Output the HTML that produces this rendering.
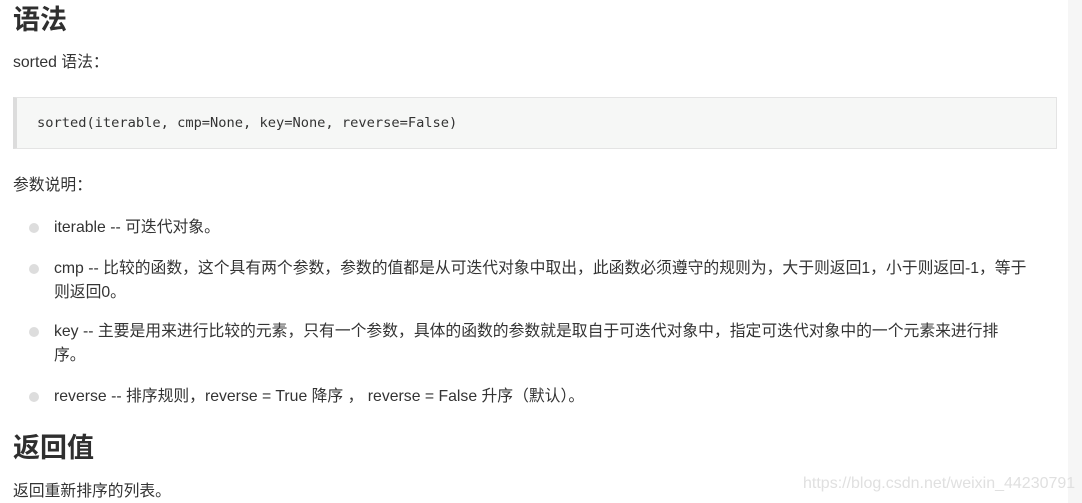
<!DOCTYPE html>
<html><head><meta charset="utf-8"><style>
html,body{margin:0;padding:0;width:1082px;height:503px;overflow:hidden;background:#fff;}
body{font-family:"Liberation Sans","Noto Sans CJK SC",sans-serif;color:#333;font-size:15.8px;position:relative;}
.a{position:absolute;white-space:nowrap;line-height:24px;}
h2{position:absolute;margin:0;font-size:27px;font-weight:bold;color:#2f2f2f;line-height:36px;}
.code{position:absolute;left:13px;top:97px;width:1039px;height:50px;background:#f6f7f6;border:1px solid #e4e4e4;border-left:4px solid #dcdcdc;}
.code span{position:absolute;left:20px;top:15px;font-family:"DejaVu Sans Mono","Liberation Mono",monospace;font-size:13.7px;color:#333;line-height:20px;}
.dot{position:absolute;left:29px;width:10px;height:10px;border-radius:50%;background:#ddd;}
.strip{position:absolute;left:1068px;top:0;width:14px;height:503px;background:#f6f6f6;}
.wm{position:absolute;left:803px;top:472px;font-size:16px;color:#e0e0e0;line-height:24px;}
</style></head><body>
<div class="strip"></div>
<h2 style="left:13px;top:2px">语法</h2>
<div class="a" style="left:13px;top:51px">sorted 语法：</div>
<div class="code"><span>sorted(iterable, cmp=None, key=None, reverse=False)</span></div>
<div class="a" style="left:13px;top:174px">参数说明：</div>
<div class="dot" style="top:223px"></div>
<div class="a" style="left:54px;top:216px">iterable -- 可迭代对象。</div>
<div class="dot" style="top:264px"></div>
<div class="a" style="left:54px;top:257px">cmp -- 比较的函数，这个具有两个参数，参数的值都是从可迭代对象中取出，此函数必须遵守的规则为，大于则返回1，小于则返回-1，等于</div>
<div class="a" style="left:54px;top:281px">则返回0。</div>
<div class="dot" style="top:327px"></div>
<div class="a" style="left:54px;top:320px">key -- 主要是用来进行比较的元素，只有一个参数，具体的函数的参数就是取自于可迭代对象中，指定可迭代对象中的一个元素来进行排</div>
<div class="a" style="left:54px;top:344px">序。</div>
<div class="dot" style="top:392px"></div>
<div class="a" style="left:54px;top:385px">reverse -- 排序规则，reverse = True 降序 ， reverse = False 升序（默认）。</div>
<h2 style="left:13px;top:430px">返回值</h2>
<div class="a" style="left:13px;top:480px">返回重新排序的列表。</div>
<div class="wm">https://blog.csdn.net/weixin_44230791</div>
</body></html>
